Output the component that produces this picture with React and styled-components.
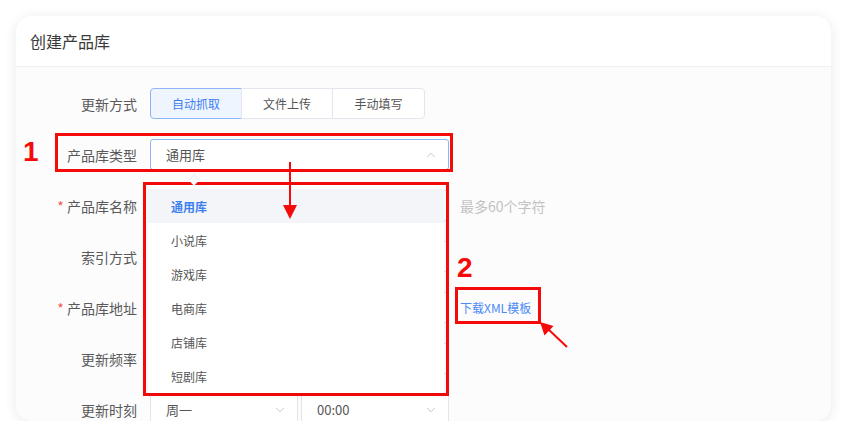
import React from 'react';
import styled, { createGlobalStyle } from 'styled-components';
import { ChevronUp, ChevronDown } from 'lucide-react';

const GlobalStyle = createGlobalStyle`
  body {
    margin: 0;
    background: #ffffff;
    font-family: "Noto Sans CJK SC", "Noto Sans", sans-serif;
  }
`;

const Card = styled.div`
  margin: 16px 16px 0 16px;
  width: 815px;
  height: 405px;
  border-radius: 16px;
  background: #fcfcfd;
  box-shadow: 0 2px 14px rgba(0, 0, 0, 0.09);
  overflow: hidden;
  position: relative;
`;

const Header = styled.div`
  height: 50px;
  display: flex;
  align-items: center;
  padding-left: 14px;
  background: #ffffff;
  border-bottom: 1px solid #eef0f6;
  font-size: 16px;
  color: #3a3a3a;
`;

const Form = styled.div`
  display: flex;
  flex-direction: column;
  gap: 20px;
  padding-top: 21px;
`;

const Row = styled.div`
  position: relative;
  display: grid;
  grid-template-columns: 134px auto;
  align-items: center;
  height: 31px;
`;

const Label = styled.div`
  text-align: right;
  padding-right: 13px;
  font-size: 14px;
  color: #595959;
  white-space: nowrap;

  &::before {
    content: ${(p) => (p.$required ? "'* '" : "''")};
    color: #f0584f;
  }
`;

const Field = styled.div`
  display: flex;
  align-items: center;
  gap: 11px;
`;

const Segmented = styled.div`
  display: flex;
`;

const Segment = styled.div`
  width: ${(p) => p.$w}px;
  height: 31px;
  box-sizing: border-box;
  display: flex;
  align-items: center;
  justify-content: center;
  font-size: 12px;
  color: ${(p) => (p.$active ? '#3e7ff0' : '#555')};
  background: ${(p) => (p.$active ? '#eef5ff' : '#fff')};
  border: 1px solid ${(p) => (p.$active ? '#8bb5f7' : '#e3e6ec')};
  margin-left: -1px;
  &:first-child {
    margin-left: 0;
    border-radius: 4px 0 0 4px;
  }
  &:last-child {
    border-radius: 0 4px 4px 0;
  }
`;

const Select = styled.div`
  width: ${(p) => p.$w || 299}px;
  height: 31px;
  box-sizing: border-box;
  display: flex;
  align-items: center;
  justify-content: space-between;
  padding: 0 10px 0 15px;
  border: 1px solid ${(p) => (p.$focus ? '#8bb5f7' : '#e2e5eb')};
  border-radius: 3px;
  background: #fff;
  font-size: 13px;
  color: #555;
`;

const Input = styled.div`
  width: 299px;
  height: 31px;
  box-sizing: border-box;
  border: 1px solid #e2e5eb;
  border-radius: 3px;
  background: #fff;
`;

const Hint = styled.span`
  font-size: 14px;
  color: #c2c2c2;
`;

const Link = styled.span`
  font-size: 12px;
  color: #4c8af5;
`;

const Pair = styled.div`
  display: flex;
  gap: 3px;
`;

const RedFrame = styled.div`
  position: absolute;
  left: ${(p) => p.$left}px;
  top: ${(p) => p.$top}px;
  width: ${(p) => p.$w}px;
  height: ${(p) => p.$h}px;
  box-sizing: border-box;
  border: 3px solid #f50a0a;
  pointer-events: none;
`;

const Marker = styled.div`
  position: absolute;
  left: ${(p) => p.$left}px;
  top: ${(p) => p.$top}px;
  font-family: "Liberation Sans", Arial, sans-serif;
  font-weight: 700;
  font-size: 28px;
  line-height: 1;
  color: #f50a0a;
`;

const DropFrame = styled.div`
  position: absolute;
  left: 127px;
  top: 43px;
  width: 306px;
  height: 214px;
  box-sizing: border-box;
  border: 3px solid #f50a0a;
  padding: 0 2px;
  z-index: 2;

  &::before {
    content: '';
    position: absolute;
    left: 44px;
    top: -9px;
    width: 7px;
    height: 7px;
    background: #fff;
    border-top: 1px solid #eceef2;
    border-left: 1px solid #eceef2;
    transform: rotate(45deg);
  }
`;

const Menu = styled.div`
  height: 100%;
  background: #fff;
  padding-top: 4px;
  box-sizing: border-box;
  box-shadow: 0 2px 8px rgba(0, 0, 0, 0.06);
`;

const MenuItem = styled.div`
  height: 34px;
  display: flex;
  align-items: center;
  padding-left: 23px;
  font-size: 12px;
  color: ${(p) => (p.$active ? '#3e7ff0' : '#555')};
  font-weight: ${(p) => (p.$active ? 600 : 400)};
  background: ${(p) => (p.$active ? '#f3f5f9' : 'transparent')};
`;

const ArrowSvg = styled.svg`
  position: absolute;
  left: ${(p) => p.$left}px;
  top: ${(p) => p.$top}px;
  z-index: 3;
  overflow: visible;
`;

const chevron = { size: 14, color: '#b9bdc5', strokeWidth: 1.5 };

const options = ['通用库', '小说库', '游戏库', '电商库', '店铺库', '短剧库'];

export default function App() {
  return (
    <>
      <GlobalStyle />
      <Card>
        <Header>创建产品库</Header>
        <Form>
          <Row>
            <Label>更新方式</Label>
            <Segmented>
              <Segment $w={92} $active>自动抓取</Segment>
              <Segment $w={92}>文件上传</Segment>
              <Segment $w={93}>手动填写</Segment>
            </Segmented>
          </Row>

          <Row style={{ zIndex: 2 }}>
            <Marker $left={7} $top={-1}>1</Marker>
            <Label>产品库类型</Label>
            <Select $focus>
              通用库
              <ChevronUp {...chevron} />
            </Select>
            <RedFrame $left={39} $top={-6} $w={398} $h={39} />
            <ArrowSvg $left={267} $top={19} width="16" height="64">
              <line x1="7" y1="4" x2="7" y2="50" stroke="#f50a0a" strokeWidth="2" />
              <polygon points="0,47 14,47 7,61" fill="#f50a0a" />
            </ArrowSvg>
            <DropFrame>
              <Menu>
                {options.map((o, i) => (
                  <MenuItem key={o} $active={i === 0}>{o}</MenuItem>
                ))}
              </Menu>
            </DropFrame>
          </Row>

          <Row>
            <Label $required>产品库名称</Label>
            <Field>
              <Input />
              <Hint>最多60个字符</Hint>
            </Field>
          </Row>

          <Row>
            <Label>索引方式</Label>
            <Field>
              <Input />
            </Field>
          </Row>

          <Row>
            <Marker $left={441} $top={-38}>2</Marker>
            <Label $required>产品库地址</Label>
            <Field>
              <Input />
              <Link>下载XML模板</Link>
            </Field>
            <RedFrame $left={439} $top={-5} $w={86} $h={37} />
            <ArrowSvg $left={520} $top={26} width="36" height="34">
              <line x1="12" y1="11" x2="31" y2="29" stroke="#f50a0a" strokeWidth="2" />
              <polygon points="4,4 17.5,8 8.5,17.5" fill="#f50a0a" />
            </ArrowSvg>
          </Row>

          <Row>
            <Label>更新频率</Label>
            <Field>
              <Input />
            </Field>
          </Row>

          <Row>
            <Label>更新时刻</Label>
            <Pair>
              <Select $w={148}>
                周一
                <ChevronDown {...chevron} />
              </Select>
              <Select $w={148}>
                00:00
                <ChevronDown {...chevron} />
              </Select>
            </Pair>
          </Row>
        </Form>
      </Card>
    </>
  );
}
